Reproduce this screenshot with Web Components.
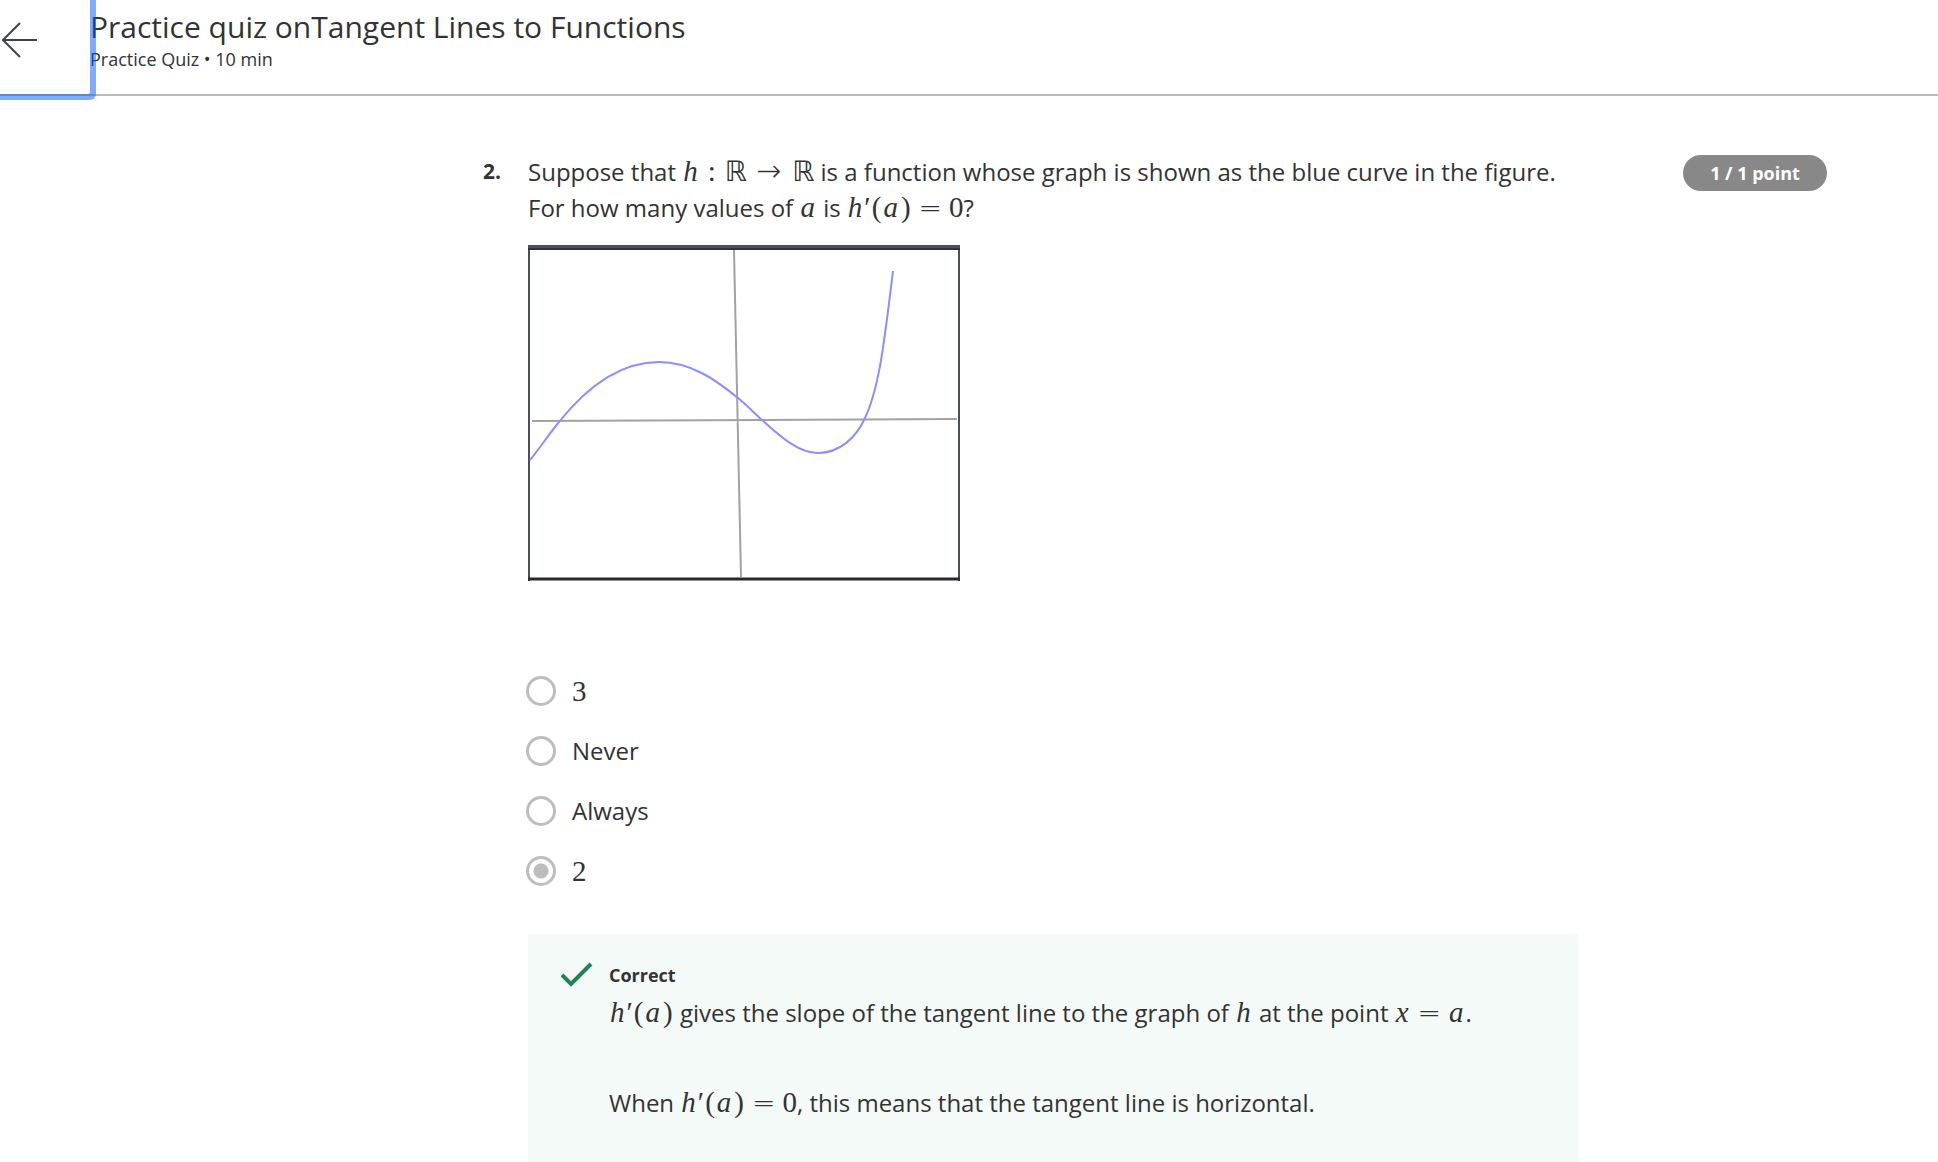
<!DOCTYPE html>
<html lang="en">
<head>
<meta charset="utf-8">
<title>Practice quiz on Tangent Lines to Functions</title>
<style>
  body { margin: 0; background: #fff; color: #333; font: 24px/36px "Open Sans", sans-serif; }
  .math { font-family: "Liberation Serif", serif; font-size: 29px; line-height: 29px; white-space: nowrap; }
  .math i { margin: 0 2px 0 1px; }
  .math .colon { margin: 0 9px 0 8px; }
  .math .par { margin: 0 1px; }
  .math .equals { margin: 0 7px; font-family: "DejaVu Sans", sans-serif; font-size: 28px; font-weight: 200; }
  .math .arrow { margin: 0 11px 0 9px; font-family: "DejaVu Sans", sans-serif; font-size: 30px; font-weight: 200; }
  .math .bb { font-family: "DejaVu Sans", sans-serif; font-size: 28px; }
</style>
</head>
<body>
<quiz-page>
  <quiz-header slot="header">
    <span slot="title">Practice quiz onTangent Lines to Functions</span>
    <span slot="meta">Practice Quiz • 10 min</span>
  </quiz-header>
  <quiz-question number="2." points="1 / 1 point">
    <p slot="prompt">Suppose that <span class="math"><i>h</i><span class="colon">:</span><span class="bb">ℝ</span><span class="arrow">→</span><span class="bb">ℝ</span></span> is a function whose graph is shown as the blue curve in the figure. For how many values of <span class="math"><i>a</i></span> is <span class="math"><i>h</i>′<span class="par">(</span><i>a</i><span class="par">)</span><span class="equals">=</span>0</span>?</p>
    <function-graph slot="figure"></function-graph>
    <answer-options slot="answers"></answer-options>
    <answer-feedback slot="feedback">
      <span slot="verdict">Correct</span>
      <p><span class="math"><i>h</i>′<span class="par">(</span><i>a</i><span class="par">)</span></span> gives the slope of the tangent line to the graph of <span class="math"><i>h</i></span> at the point <span class="math"><i>x</i><span class="equals">=</span><i>a</i></span>.</p>
      <p>When <span class="math"><i>h</i>′<span class="par">(</span><i>a</i><span class="par">)</span><span class="equals">=</span>0</span>, this means that the tangent line is horizontal.</p>
    </answer-feedback>
  </quiz-question>
</quiz-page>

<script>
const define = (name, html, setup) => customElements.define(name, class extends HTMLElement {
  constructor() {
    super();
    this.attachShadow({ mode: "open" }).innerHTML = html;
  }
  connectedCallback() { if (setup) setup(this, this.shadowRoot); }
});

define("quiz-page", `
  <style>
    :host { display: flex; flex-direction: column; min-height: 100vh; }
    main { flex: 1; display: flex; flex-direction: column; padding: 58px 111px 0 483px; }
  </style>
  <slot name="header"></slot>
  <main><slot></slot></main>`);

define("quiz-header", `
  <style>
    :host { display: flex; height: 94px; border-bottom: 2px solid #bbb; }
    button { flex: none; width: 90px; padding: 0 0 14px 2px; border: 0; background: none; position: relative;
      z-index: 1; border-radius: 0 0 2px 0; box-shadow: 0 0 0 6px rgba(0, 87, 255, .5); display: flex; align-items: center; }
    svg { display: block; fill: none; stroke: #40444a; stroke-width: 2; }
    .text { padding-top: 9px; }
    h1 { margin: 0; font-size: 30px; line-height: 36px; font-weight: 400; }
    p { margin: 0; font-size: 18px; line-height: 28px; }
  </style>
  <button type="button" aria-label="Back">
    <svg width="36" height="36" viewBox="0 0 36 36"><path d="M35 18H1M18 1L1 18L18 35"/></svg>
  </button>
  <div class="text">
    <h1><slot name="title"></slot></h1>
    <p><slot name="meta"></slot></p>
  </div>`);

define("quiz-question", `
  <style>
    :host { flex: 1; display: grid; grid-template-columns: 45px 1fr 249px; }
    .number { font-size: 21px; line-height: 34px; font-weight: 700; }
    .body { display: flex; flex-direction: column; }
    ::slotted(p) { margin: 0; }
    .points { justify-self: end; align-self: start; box-sizing: border-box; min-width: 144px; margin-top: 1px;
      border-radius: 18px; background: #888; color: #fff; font-size: 18px; font-weight: 700; text-align: center; }
  </style>
  <div class="number"></div>
  <div class="body">
    <slot name="prompt"></slot>
    <slot name="figure"></slot>
    <slot name="answers"></slot>
    <slot name="feedback"></slot>
  </div>
  <div class="points"></div>`,
  (host, root) => {
    root.querySelector(".number").textContent = host.getAttribute("number");
    root.querySelector(".points").textContent = host.getAttribute("points");
  });

define("function-graph", `
  <style>
    :host { display: block; margin-top: 19px; }
    svg { display: block; }
  </style>
  <svg width="432" height="336" viewBox="0 0 432 336" fill="none" role="img" aria-label="Graph of h">
    <path d="M1 0V336M431 0V336" stroke="#4a5054" stroke-width="2"/>
    <path d="M0 2H432" stroke="#4b5257" stroke-width="4"/>
    <path d="M0 4H432" stroke="#2d363b" stroke-width="2"/>
    <path d="M0 334H432" stroke="#24292d" stroke-width="3"/>
    <path d="M206 5L213 332M4 176L429 174" stroke="#a2a2a2" stroke-width="2"/>
    <path d="M2 215C12 203 21 189 31 177C58 143 92 117 131 117C163 117 188 135 210 153C220 161 226 168 234 175C252 191 270 208 290 208C312 208 328 192 336 175C352 143 357 90 365 26" stroke="#8f8cff" stroke-width="2"/>
  </svg>`);

define("answer-options", `
  <style>
    :host { display: block; margin-top: 80px; }
    fieldset { margin: 0 0 0 -2px; padding: 0; border: 0; }
    label { display: flex; align-items: center; gap: 16px; height: 60px; }
    input { appearance: none; box-sizing: border-box; width: 30px; height: 30px; margin: 0;
      border: 3px solid #bdbdbd; border-radius: 50%; background: #fff; }
    input:checked { background: radial-gradient(circle, #bdbdbd 7px, #fff 8px); }
    .math { font-family: "Liberation Serif", serif; font-size: 29px; }
  </style>
  <fieldset>
    <label><input type="radio" name="answer"><span class="math">3</span></label>
    <label><input type="radio" name="answer"><span>Never</span></label>
    <label><input type="radio" name="answer"><span>Always</span></label>
    <label><input type="radio" name="answer" checked><span class="math">2</span></label>
  </fieldset>`);

define("answer-feedback", `
  <style>
    :host { flex: 1; display: flex; margin-top: 33px; padding: 28px 33px 36px; background: #f4faf8; }
    svg { flex: none; display: block; margin-right: 14px; fill: none; stroke: #1f8354; stroke-width: 4; }
    .verdict { font-size: 18px; line-height: 27px; font-weight: 700; margin-bottom: 6px; }
    ::slotted(p) { margin: 0 0 54px; }
  </style>
  <svg width="34" height="28" viewBox="0 0 34 28" aria-hidden="true"><path d="M1 13L10 22L30 2"/></svg>
  <div>
    <div class="verdict"><slot name="verdict"></slot></div>
    <slot></slot>
  </div>`);
</script>
</body>
</html>
